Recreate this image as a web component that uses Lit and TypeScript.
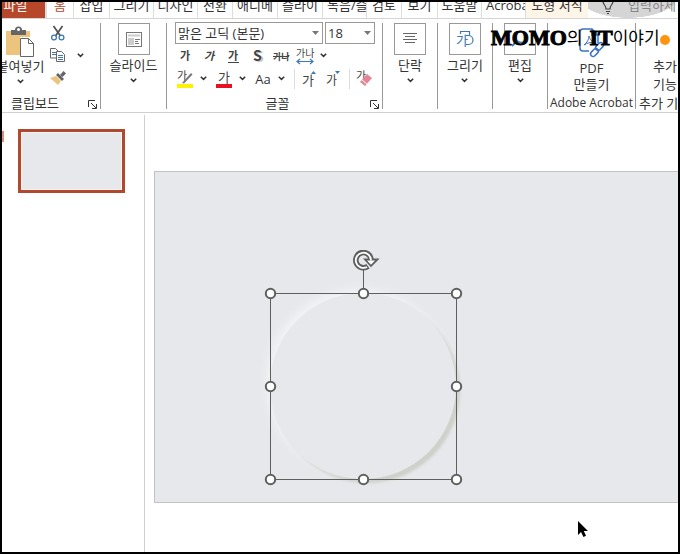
import { LitElement, html, css, svg } from "lit";
import { customElement } from "lit/decorators.js";

const chevron = html`<svg class="chev" width="7" height="5" viewBox="0 0 7 5"><path d="M.8.8 3.5 3.4 6.2.8" fill="none" stroke="#333" stroke-width="1.5"/></svg>`;
const launcher = html`<svg width="9" height="9" viewBox="0 0 9 9"><path d="M.5 7V.5H7M3 3l5 5M8.500 4v4.500H4" fill="none" stroke="#333"/></svg>`;

const pasteIcon = html`<svg width="30" height="32" viewBox="0 0 30 32">
  <path d="M0 5h24v6H14v18H0z" fill="#edc47d"/>
  <path d="M5 9V4h4a3.500 3.500 0 0 1 7 0h4v5z" fill="#666"/><circle cx="12.500" cy="3.500" r="1.500" fill="#fff"/>
  <path d="M14.500 12.500h8l5 5v13h-13z" fill="#fff" stroke="#666"/><path d="M22.500 12.500v5h5" fill="none" stroke="#666"/></svg>`;
const cutIcon = html`<svg width="16" height="16" viewBox="0 0 16 16">
  <path d="M3.500 1 10.500 11M12.500 1 5.500 11" stroke="#555" stroke-width="1.800" fill="none"/>
  <circle cx="4" cy="12.500" r="2.400" fill="none" stroke="#3e78b2" stroke-width="1.300"/><circle cx="11.500" cy="12.500" r="2.400" fill="none" stroke="#3e78b2" stroke-width="1.300"/></svg>`;
const copyIcon = html`<svg width="16" height="14" viewBox="0 0 16 14">
  <path d="M.5.5h5l3 3v6.500h-8z" fill="#fff" stroke="#666"/><path d="M2 4.500h4M2 6.500h4" stroke="#3e78b2"/>
  <path d="M6.500 3.500h5l3 3v7h-8z" fill="#fff" stroke="#666"/><path d="M8 7.500h5M8 9.500h5M8 11.500h5" stroke="#3e78b2"/></svg>`;
const brushIcon = html`<svg width="16" height="14" viewBox="0 0 16 14">
  <path d="M0 7 6 5l5 5-3 4z" fill="#edc47d"/><path d="m6 4 2-2 6 6-2 2z" fill="#666"/><path d="m10 4 3.500-4L16 2.500 12.500 6z" fill="#666"/></svg>`;
const slideIcon = html`<svg width="16" height="15" viewBox="0 0 16 15"><rect x=".5" y=".5" width="15" height="14" fill="#fff" stroke="#777"/>
  <path d="M2 3.500h12" stroke="#ccc" stroke-width="2"/><path d="M2 6h6v7H2z" fill="#ccc"/><path d="M9 7.500h5M9 9.500h3M9 11.500h4" stroke="#777"/></svg>`;
const paraIcon = html`<svg width="14" height="12" viewBox="0 0 14 12"><path d="M0 .5h14M2 3.500h10M0 6.500h14M2 9.500h10" stroke="#666"/></svg>`;
const drawIcon = html`<svg width="18" height="18" viewBox="0 0 18 18"><g fill="none" stroke="#3e78b2" stroke-width="1.200">
  <path d="M4.500 4V1.500h9V5M9.500 5.500h3a4.500 4.500 0 0 1 0 9h-3"/></g><text x="0" y="15" font-size="13" fill="#3e78b2">가</text></svg>`;
const findIcon = html`<svg width="18" height="18" viewBox="0 0 18 18"><circle cx="10" cy="7" r="5.500" fill="none" stroke="#3e78b2" stroke-width="1.600"/><path d="m6 11-5 5" stroke="#3e78b2" stroke-width="2"/></svg>`;
const pdfIcon = html`<svg width="26" height="30" viewBox="0 0 26 30"><g fill="none" stroke="#3a72c4" stroke-width="1.500">
  <path d="M10 23H4a3 3 0 0 1-3-3V4a3 3 0 0 1 3-3h9l6 6v8M13 1v6h6"/><path d="M5 17c3-2 5-6 5-9 1 4 3 6 6 6-4 0-8 1-11 3z" stroke-width="1"/>
  <rect x="16" y="16" width="9" height="5" rx="2.500" transform="rotate(-45 20.500 18.500)"/><rect x="11" y="22" width="9" height="5" rx="2.500" transform="rotate(-45 15.500 24.500)"/></g></svg>`;
const bulbIcon = html`<svg width="12" height="14" viewBox="0 0 12 14"><path d="M1 0c0 4 3 4 3 8h4c0-4 3-4 3-8M4 10.500h4M5 12.500h2" fill="none" stroke="#444" stroke-width="1.200"/></svg>`;

const glyph = (w: number, body: unknown) => html`<svg width="${w}" height="18" viewBox="0 0 ${w} 18">${body}</svg>`;
const ga = (x: number, y: number, size: number, cls = "") => svg`<text class="${cls}" x="${x}" y="${y}" font-size="${size}">가</text>`;

@customElement("ribbon-big-button")
class RibbonBigButton extends LitElement {
  static properties = { label: {}, icon: { attribute: false } };
  declare label: string;
  declare icon: unknown;
  static styles = css`
    :host { display: flex; justify-content: center; }
    button { all: unset; display: flex; flex-direction: column; align-items: center; white-space: nowrap; font-size: 13px; line-height: 20px; }
    .box { box-sizing: border-box; width: 32px; height: 32px; border: 1px solid #999; display: grid; place-items: center; }
    .box svg { display: block; }
    .chev { margin-top: 3px; }
  `;
  render() {
    return html`<button type="button"><span class="box">${this.icon}</span><span>${this.label}</span>${chevron}</button>`;
  }
}

@customElement("slide-shape")
class SlideShape extends LitElement {
  static styles = css`
    :host { display: block; width: 200px; height: 240px; }
    .stack { display: grid; }
    .disc, svg { grid-area: 1 / 1; }
    .disc { width: 186px; height: 186px; margin: 43px 0 0 7px; border-radius: 50%; background: #e7e8ec;
      box-shadow: -4px -4px 8px #f2f3f5, 4px 4px 3px #cdd0c9; }
    svg { display: block; position: relative; }
  `;
  render() {
    const pts = [[7, 43], [100, 43], [193, 43], [7, 136], [193, 136], [7, 229], [100, 229], [193, 229]];
    return html`<div class="stack"><div class="disc"></div>
      <svg width="200" height="240" viewBox="0 0 200 240">
        <path d="M7.500 43.500h186v186H7.500zM100.500 20v23" fill="none" stroke="#5e6060"/>
        <path d="M105 16.200A7.600 7.600 0 1 1 108 9.500" fill="none" stroke="#5e6060" stroke-width="5.600"/>
        <path d="M102 9.500h12.500l-6.500 6.500z" fill="#fff" stroke="#5e6060" stroke-width="1.800"/>
        <path d="M104 17A7.600 7.600 0 1 1 108 10.500" fill="none" stroke="#fff" stroke-width="1.800"/>
        ${pts.map(([x, y]) => svg`<circle cx="${x + 0.5}" cy="${y + 0.5}" r="4.700" fill="#fff" stroke="#5e6060" stroke-width="2"/>`)}
      </svg></div>`;
  }
}

@customElement("app-root")
class AppRoot extends LitElement {
  static styles = css`
    :host { display: block; font-family: "Open Sans", "Noto Sans CJK KR", sans-serif; font-size: 13px; line-height: 16px; color: #333; }
    * { box-sizing: border-box; }
    button { all: unset; box-sizing: border-box; white-space: nowrap; }
    svg { display: block; flex: none; overflow: visible; }
    svg text { font-family: "Noto Sans CJK KR", sans-serif; fill: #444; }
    .window { position: relative; display: flex; flex-direction: column; height: 100vh; border: 2px solid #000; background: #fff; overflow: hidden; }

    .tabs { display: flex; flex: none; height: 17px; border-bottom: 1px solid #d5d5d5; overflow: hidden; white-space: nowrap; }
    .tab { flex: none; height: 16px; width: 35px; padding: 0 4px 3px; overflow: hidden; border-right: 1px solid #ddd; display: flex; align-items: flex-end; justify-content: center; line-height: 20px; }
    .tab.start { justify-content: flex-start; }
    .w36 { width: 36px; } .w44 { width: 44px; } .w45 { width: 45px; }
    .file { width: 43px; background: #b7472a; color: #fff; border: 0; padding-right: 20px; }
    .home { width: 29px; color: #b7472a; border-left: 2px solid #ddd; }
    .format { width: 62px; background: #fdf5e8; border: 0; }
    .tell { flex: 1; display: flex; gap: 14px; padding: 0 0 3px 14px; line-height: 20px; align-items: flex-end; color: #888;
      background: radial-gradient(ellipse 50px 22px at 40px -6px, #d5d5d5 98%, transparent); overflow: hidden; }

    .ribbon { display: flex; flex: none; height: 94px; padding: 4px 0; border-bottom: 1px solid #d0d0d0; overflow: hidden; }
    .group { flex: none; display: flex; flex-direction: column; border-right: 1px solid #999; width: 55px; height: 86px; white-space: nowrap; }
    .clipboard { width: 99px; } .slides { width: 66px; } .font { width: 216px; padding-left: 6px; }
    .acrobat { width: 88px; } .addin { flex: 1; min-width: 0; border: 0; overflow: visible; padding-left: 3px; }
    .body { flex: 1; min-height: 0; }
    .caption { flex: none; height: 16px; margin-bottom: -2px; display: flex; align-items: center; justify-content: center; position: relative; }
    .caption button { position: absolute; right: 3px; bottom: 2px; }
    .clipboard .caption { padding-right: 32px; }
    .acrobat .caption { font-size: 12px; }
    .clip { display: flex; }
    .paste { width: 37px; display: flex; flex-direction: column; align-items: center; padding-top: 3px; line-height: 16px; }
    .paste .chev { margin-top: 5px; }
    .edit { display: grid; grid-template-columns: 16px 7px; gap: 0 11px; margin-left: 11px; grid-template-rows: 20px 24px 22px; align-items: center; justify-items: center; }
    .edit .cut { grid-area: 1 / 1; } .edit .copy { grid-area: 2 / 1; } .edit .brush { grid-area: 3 / 1; } .edit .more { grid-area: 2 / 2; }

    .selects { display: flex; gap: 2px; padding-left: 2px; height: 22px; margin-top: -1px; }
    .pick { position: relative; width: 148px; }
    .pick.size { width: 50px; }
    .pick select { appearance: none; width: 100%; height: 22px; border: 1px solid #999; border-radius: 0; background: #fff; padding: 0 2px; font: inherit; color: #333; outline: 0; }
    .pick svg { position: absolute; right: 4px; top: 9px; pointer-events: none; }
    .tools { display: flex; align-items: center; height: 23px; }
    .tools button { width: 24px; height: 20px; display: grid; place-items: center; }
    .tools .drop { width: 15px; padding-right: 2px; }
    .tools .rule { width: 1px; height: 20px; background: #ddd; margin: 0 2px 0 4px; }
    .b { font-weight: 700; } .i { font-style: italic; font-weight: 700; }

    .pdf { display: flex; flex-direction: column; align-items: center; width: 87px; padding-top: 5px; line-height: 16px; }
    .pdf svg { margin-bottom: 2px; }
    .extra { padding: 34px 0 0 14px; line-height: 18px; display: block; }
    .addin .caption { justify-content: flex-start; }

    .work { flex: 1; display: flex; min-height: 0; }
    .thumbs { flex: none; width: 143px; padding: 16px 0 0; margin-top: 2px; border-right: 1px solid #d0d0d0; display: flex; align-items: flex-start; gap: 14px; }
    .mark { width: 2px; height: 11px; background: #dc8f7e; }
    .thumb { width: 107px; height: 64px; margin-top: -2px; border: 3px solid #b0492f; padding: 1px; background: #fff5ee; }
    .thumb span { display: block; height: 100%; background: #e7e8ec; }
    .editor { flex: 1; display: flex; min-width: 0; padding: 58px 0 49px 9px; }
    .slide { position: relative; flex: 1; background: #e7e8ec; border: 1px solid #c2c2c2; border-right: 0; overflow: hidden; }
    slide-shape { position: absolute; left: 108px; top: 78px; }
    .pointer { position: absolute; left: 575px; top: 518px; }
    .watermark { position: absolute; left: 489px; top: 24px; display: flex; align-items: center; color: #000; font-size: 17px; line-height: 24px; white-space: pre; }
    .watermark b { font-family: "Liberation Serif", serif; font-weight: 700; font-size: 22px; -webkit-text-stroke: 1px #000; }
    .watermark .it { margin-left: 7px; }
    .watermark i { width: 10px; height: 10px; border-radius: 50%; background: #ff9412; margin-top: 4px; }
  `;

  render() {
    const tri = html`<svg width="7" height="4" viewBox="0 0 7 4"><path d="M0 0h7L3.500 4z" fill="#777"/></svg>`;
    const drop = (label: string) => html`<button class="drop" type="button" aria-label=${label}>${chevron}</button>`;
    return html`<div class="window">
      <nav class="tabs">
        <button class="tab file">파일</button><button class="tab home">홈</button>
        <button class="tab w36">삽입</button><button class="tab w44">그리기</button><button class="tab w44">디자인</button>
        <button class="tab">전환</button><button class="tab w45 start">애니메</button><button class="tab w45 start">슬라이</button>
        <button class="tab w44 start">녹음/슬</button><button class="tab">검토</button><button class="tab w36">보기</button>
        <button class="tab w44">도움말</button><button class="tab w44 start">Acrobat</button><button class="tab format">도형 서식</button>
        <div class="tell">${bulbIcon}<span>입력하세</span></div>
      </nav>

      <div class="ribbon">
        <section class="group clipboard">
          <div class="body clip">
            <button class="paste">${pasteIcon}<span>붙여넣기</span>${chevron}</button>
            <div class="edit">
              <button class="cut" aria-label="잘라내기">${cutIcon}</button>
              <button class="copy" aria-label="복사">${copyIcon}</button><button class="more" aria-label="복사 옵션">${chevron}</button>
              <button class="brush" aria-label="서식 복사">${brushIcon}</button>
            </div>
          </div>
          <div class="caption">클립보드<button aria-label="클립보드 옵션">${launcher}</button></div>
        </section>
        <section class="group slides"><ribbon-big-button .icon=${slideIcon} label="슬라이드"></ribbon-big-button></section>
        <section class="group font">
          <div class="body">
            <div class="selects">
              <div class="pick"><select aria-label="글꼴"><option>맑은 고딕 (본문)</option></select>${tri}</div>
              <div class="pick size"><select aria-label="글꼴 크기"><option>18</option></select>${tri}</div>
            </div>
            <div class="tools">
              <button aria-label="굵게">${glyph(12, ga(1, 13, 11, "b"))}</button>
              <button aria-label="기울임꼴">${glyph(12, ga(1, 13, 11, "i"))}</button>
              <button aria-label="밑줄">${glyph(12, svg`${ga(1, 13, 11, "b")}<path d="M1 15.500h11" stroke="#444"/>`)}</button>
              <button aria-label="그림자">${glyph(12, svg`<text class="b" x="4" y="15" font-size="14" opacity=".3" aria-hidden="true">S</text><text x="2" y="14" font-size="14" class="b">S</text>`)}</button>
              <button aria-label="취소선">${glyph(16, svg`<text x="0" y="13" font-size="9" class="b">가나</text><path d="M0 9.500h16" stroke="#444"/>`)}</button>
              <button aria-label="문자 간격">${glyph(18, svg`<text x="0" y="10" font-size="10">가나</text><path d="M1 14.500h16M4 12l-3 2.500 3 2.500M14 12l3 2.500-3 2.500" fill="none" stroke="#3e78b2" stroke-width="1.200"/>`)}</button>
              ${drop("문자 간격 옵션")}
            </div>
            <div class="tools">
              <button aria-label="강조 색">${glyph(16, svg`${ga(0, 10, 11)}<path d="m5 13 9-10 1.500 1.500L7 13.500z" fill="#777"/><path d="M0 14h16v4H0z" fill="#fff200"/>`)}</button>${drop("강조 색 옵션")}
              <button aria-label="글꼴 색">${glyph(16, svg`${ga(2, 12, 13)}<path d="M0 14h16v4H0z" fill="#e81123"/>`)}</button>${drop("글꼴 색 옵션")}
              <button aria-label="대소문자">Aa</button>${drop("대소문자 옵션")}
              <span class="rule"></span>
              <button aria-label="크게">${glyph(14, svg`${ga(0, 15, 13)}<path d="M9 4h5l-2.500-3z" fill="#3e78b2"/>`)}</button>
              <button aria-label="작게">${glyph(14, svg`${ga(0, 15, 12)}<path d="M9 1h5l-2.500 3z" fill="#3e78b2"/>`)}</button>
              <span class="rule"></span>
              <button aria-label="서식 지우기">${glyph(16, svg`${ga(0, 10, 11)}<path d="m4 12 7-8 5 4-7 8z" fill="#e48596"/><path d="m6 10 5 4" stroke="#fff"/>`)}</button>
            </div>
          </div>
          <div class="caption">글꼴<button aria-label="글꼴 옵션">${launcher}</button></div>
        </section>
        <section class="group"><ribbon-big-button .icon=${paraIcon} label="단락"></ribbon-big-button></section>
        <section class="group"><ribbon-big-button .icon=${drawIcon} label="그리기"></ribbon-big-button></section>
        <section class="group"><ribbon-big-button .icon=${findIcon} label="편집"></ribbon-big-button></section>
        <section class="group acrobat">
          <div class="body"><button class="pdf">${pdfIcon}<span>PDF</span><span>만들기</span></button></div>
          <div class="caption">Adobe Acrobat</div>
        </section>
        <section class="group addin">
          <div class="body"><button class="extra">추가<br>기능</button></div>
          <div class="caption">추가 기능</div>
        </section>
      </div>

      <main class="work">
        <aside class="thumbs"><span class="mark"></span><div class="thumb"><span></span></div></aside>
        <div class="editor"><div class="slide"><slide-shape></slide-shape></div></div>
      </main>
      <div class="watermark"><b>MOMO</b><span>의</span><b class="it">IT</b><span>이야기</span><i></i></div>
      <svg class="pointer" width="12" height="18" viewBox="0 0 12 18"><path d="M1 1v14l3-3 2.500 5 2.500-1.200L6.800 11H11z" fill="#000"/></svg>
    </div>`;
  }
}
